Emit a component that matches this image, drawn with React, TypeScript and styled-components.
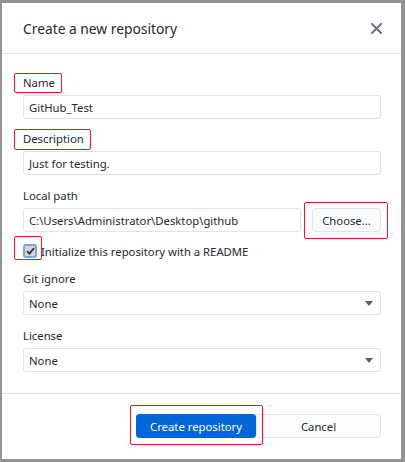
import React from "react";
import styled, { createGlobalStyle } from "styled-components";

const Global = createGlobalStyle`
  html, body { margin: 0; padding: 0; }
  body {
    background: #939393;
    font-family: "Noto Sans", "Open Sans", sans-serif;
    color: #24292e;
    width: 405px;
    height: 462px;
    overflow: hidden;
  }
`;

const Dialog = styled.div`
  margin: 3px 4px 3px 2px;
  width: 399px;
  height: 456px;
  background: #fff;
  display: flex;
  flex-direction: column;
  box-sizing: border-box;
`;

const Header = styled.div`
  height: 50px;
  padding: 0 17px 0 21px;
  display: flex;
  align-items: center;
  justify-content: space-between;
  border-bottom: 1px solid #e1e4e8;
  flex-shrink: 0;
`;

const Title = styled.div`
  font-size: 13.8px;
  color: #24292e;
`;

const CloseBtn = styled.button`
  width: 16px;
  height: 16px;
  padding: 0;
  border: none;
  background: none;
  display: flex;
  align-items: center;
  justify-content: center;
`;

const Body = styled.div`
  padding: 21px 20px 21px 21px;
  border-bottom: 1px solid #e1e4e8;
  display: flex;
  flex-direction: column;
`;

const Field = styled.div<{ $mt?: number }>`
  display: flex;
  flex-direction: column;
  margin-top: ${(p) => p.$mt ?? 0}px;
`;

const LabelRow = styled.div`
  height: 16px;
  margin-bottom: 4px;
  display: flex;
  align-items: center;
`;

const Label = styled.span`
  font-size: 11.3px;
  line-height: 16px;
  position: relative;
`;

const Mark = styled.span<{ $l: number; $t: number; $w: number; $h: number }>`
  position: absolute;
  left: ${(p) => p.$l}px;
  top: ${(p) => p.$t}px;
  width: ${(p) => p.$w}px;
  height: ${(p) => p.$h}px;
  border: 1px solid #f0141e;
  border-radius: 2px;
  box-sizing: border-box;
  pointer-events: none;
`;

const Input = styled.div<{ $grow?: boolean }>`
  height: 24px;
  flex: ${(p) => (p.$grow ? "1 1 auto" : "0 0 24px")};
  box-sizing: border-box;
  border: 1px solid #e1e4e8;
  border-radius: 3px;
  padding: 0 6px 0 5px;
  font-size: 11.3px;
  display: flex;
  align-items: center;
  justify-content: space-between;
  color: #24292e;
  white-space: nowrap;
`;

const PathRow = styled.div`
  display: flex;
  gap: 11px;
  align-items: center;
`;

const ButtonWrap = styled.div`
  position: relative;
  display: flex;
`;

const Button = styled.button<{ $primary?: boolean; $w: number }>`
  width: ${(p) => p.$w}px;
  height: 24px;
  box-sizing: border-box;
  border-radius: 3px;
  font-family: inherit;
  font-size: 11.3px;
  padding: 0;
  border: 1px solid ${(p) => (p.$primary ? "#0366d6" : "#e1e4e8")};
  background: ${(p) => (p.$primary ? "#0366d6" : "#fafbfc")};
  color: ${(p) => (p.$primary ? "#fff" : "#24292e")};
`;

const CheckRow = styled.div`
  margin-top: 11px;
  height: 16px;
  display: flex;
  align-items: center;
  gap: 4px;
  font-size: 11.3px;
`;

const CheckWrap = styled.span`
  position: relative;
  display: flex;
`;

const Box = styled.span`
  width: 14px;
  height: 14px;
  box-sizing: border-box;
  border: 2px solid #7aa7e0;
  border-radius: 3px;
  background: #d6d6d6;
  display: flex;
  align-items: center;
  justify-content: center;
`;

const Arrow = styled.span`
  width: 0;
  height: 0;
  border-left: 4px solid transparent;
  border-right: 4px solid transparent;
  border-top: 5px solid #586069;
  margin-right: 1px;
`;

const Footer = styled.div`
  flex: 1;
  padding: 20px 20px 0 21px;
  display: flex;
  justify-content: flex-end;
  align-items: flex-start;
`;

export default function App() {
  return (
    <>
      <Global />
      <Dialog>
        <Header>
          <Title>Create a new repository</Title>
          <CloseBtn aria-label="close">
            <svg width="11" height="11" viewBox="0 0 11 11">
              <path d="M1 1 L10 10 M10 1 L1 10" stroke="#6a737d" strokeWidth="2" strokeLinecap="square" />
            </svg>
          </CloseBtn>
        </Header>
        <Body>
          <Field>
            <LabelRow>
              <Label>
                Name
                <Mark $l={-9} $t={-2} $w={48} $h={20} />
              </Label>
            </LabelRow>
            <Input>GitHub_Test</Input>
          </Field>
          <Field $mt={12}>
            <LabelRow>
              <Label>
                Description
                <Mark $l={-9} $t={-2} $w={77} $h={21} />
              </Label>
            </LabelRow>
            <Input>Just for testing.</Input>
          </Field>
          <Field $mt={13}>
            <LabelRow>
              <Label>Local path</Label>
            </LabelRow>
            <PathRow>
              <Input $grow>C:\Users\Administrator\Desktop\github</Input>
              <ButtonWrap>
                <Button $w={69}>Choose...</Button>
                <Mark $l={-8} $t={-6} $w={84} $h={37} />
              </ButtonWrap>
            </PathRow>
          </Field>
          <CheckRow>
            <CheckWrap>
              <Box>
                <svg width="9" height="8" viewBox="0 0 9 8">
                  <path d="M1 4.2 L3.4 6.6 L8 1.2" stroke="#333" strokeWidth="1.8" fill="none" />
                </svg>
              </Box>
              <Mark $l={-9} $t={-8} $w={28} $h={24} />
            </CheckWrap>
            <span>Initialize this repository with a README</span>
          </CheckRow>
          <Field $mt={12}>
            <LabelRow>
              <Label>Git ignore</Label>
            </LabelRow>
            <Input>
              None
              <Arrow />
            </Input>
          </Field>
          <Field $mt={13}>
            <LabelRow>
              <Label>License</Label>
            </LabelRow>
            <Input>
              None
              <Arrow />
            </Input>
          </Field>
        </Body>
        <Footer>
          <ButtonWrap>
            <Button $primary $w={120}>Create repository</Button>
            <Mark $l={-6} $t={-9} $w={133} $h={40} />
          </ButtonWrap>
          <Button $w={125}>Cancel</Button>
        </Footer>
      </Dialog>
    </>
  );
}
